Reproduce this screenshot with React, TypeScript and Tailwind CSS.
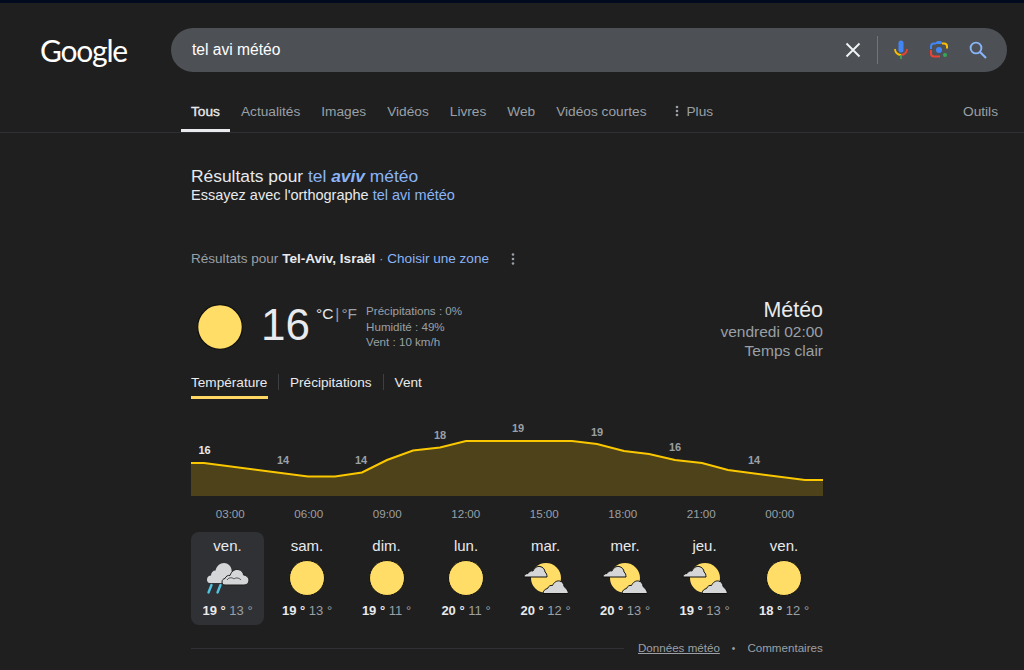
const tabs = ['Actualités', 'Images', 'Vidéos', 'Livres', 'Web', 'Vidéos courtes'];
const hours = ['03:00', '06:00', '09:00', '12:00', '15:00', '18:00', '21:00', '00:00'];

type Kind = 'sun' | 'rain' | 'partly';

const days: { name: string; kind: Kind; hi: number; lo: number }[] = [
  { name: 'ven.', kind: 'rain', hi: 19, lo: 13 },
  { name: 'sam.', kind: 'sun', hi: 19, lo: 13 },
  { name: 'dim.', kind: 'sun', hi: 19, lo: 11 },
  { name: 'lun.', kind: 'sun', hi: 20, lo: 11 },
  { name: 'mar.', kind: 'partly', hi: 20, lo: 12 },
  { name: 'mer.', kind: 'partly', hi: 20, lo: 13 },
  { name: 'jeu.', kind: 'partly', hi: 19, lo: 13 },
  { name: 'ven.', kind: 'sun', hi: 18, lo: 12 },
];

// chart coordinates, relative to the chart's left edge / top of the svg
const line =
  '0,53 13,53 117,66.5 144,66.5 171,62.5 196,50 222,40.5 249,37.5 275,31 381,31 406,34 433,41 458,44 484,50 511,53 537,60 614,70 632,70';
const labels = [
  { x: 13.5, y: 44, v: 16, active: true },
  { x: 92, y: 54, v: 14 },
  { x: 170, y: 54, v: 14 },
  { x: 249, y: 29, v: 18 },
  { x: 327, y: 22, v: 19 },
  { x: 406, y: 26, v: 19 },
  { x: 484, y: 41, v: 16 },
  { x: 563, y: 54, v: 14 },
];

function Sun({ size }: { size: number }) {
  return (
    <svg width={size} height={size} viewBox="0 0 36 36">
      <circle cx="18" cy="18" r="17.5" fill="#ffdd66" stroke="#111" strokeWidth="1" />
    </svg>
  );
}

function Rain() {
  return (
    <svg width="44" height="34" viewBox="0 0 44 34">
      <path d="M4 22 C1.5 22 1 20 1 18.5 C1 16 3 14.5 5 14.5 C5 11.5 7 9.5 9.5 9.5 C10.5 5 14 2 18 2 C22 2 25 5 25.5 8.5 L26 14 L19 22 Z" fill="#d5d6d7" />
      <path d="M19 24 C17 24 16 22.5 16 21 C16 19 17.5 17.5 19 17.5 C20 15 22 14 24 14.5 C25.5 10 29 8 32 8.5 C35.5 9 37.5 11.5 37.5 14 C40 14 43 16.5 43 19 C43 22 41 24 38 24 Z" fill="#d5d6d7" stroke="#1f1f1f" strokeWidth="1" />
      <path d="M21 19 C22.5 16.5 26 16 28 18 C29.5 16.5 33 16.5 35 19" fill="none" stroke="#2a2a2a" strokeWidth="0.8" />
      <path d="M5.5 24 L2.5 31.5 M14.5 24 L11.5 31.5" stroke="#4fc3e0" strokeWidth="2.4" strokeLinecap="round" />
    </svg>
  );
}

function Partly() {
  return (
    <svg width="46" height="34" viewBox="0 0 46 34">
      <circle cx="23" cy="17" r="15" fill="#ffdd66" />
      <path d="M1 16 C1 14 2.5 12.5 5 12.5 C6 10.5 8 9.5 10 10 C11.5 6.5 14.5 5 17 5.5 C20 6 22 8.5 22 11 C23.5 12 24 14 24 16 Z" fill="#d5d6d7" stroke="#111" strokeWidth="1" />
      <path d="M20 32.5 C20 30 22 28 24.5 27.5 C25.5 25 27.5 24 29.5 24.5 C31 21 34 19.5 36.5 20 C39.5 20.5 41 23 41 25.5 C43.5 27 45 30 45.5 32.5 Z" fill="#d5d6d7" stroke="#111" strokeWidth="1" />
    </svg>
  );
}

function DayIcon({ kind }: { kind: Kind }) {
  if (kind === 'sun') return <Sun size={36} />;
  if (kind === 'rain') return <Rain />;
  return <Partly />;
}

export default function App() {
  return (
    <div
      className="w-[1024px] h-[670px] overflow-hidden bg-[#1f1f1f] text-[#e8eaed]"
      style={{ fontFamily: '"Liberation Sans", Arial, sans-serif' }}
    >
      <div className="h-[3px] bg-[#010a1f]"></div>

      {/* Header */}
      <div className="flex items-center mt-[25px] h-[44px]">
        <div className="w-[171px] pl-[40px] text-white text-[30px] leading-none tracking-[-1.2px] font-['Lato',sans-serif] -mt-[1px]">
          Google
        </div>
        <div className="w-[836px] h-[44px] rounded-full bg-[#4d5156] flex items-center pl-[21px] pr-[17px]">
          <span className="flex-1 text-[15.6px] text-white">tel avi météo</span>
          <svg width="24" height="24" viewBox="0 0 24 24" className="mr-[12px]">
            <path d="M5.5 5.5 L18.5 18.5 M18.5 5.5 L5.5 18.5" stroke="#f1f3f4" strokeWidth="1.9" />
          </svg>
          <div className="w-[1px] h-[28px] bg-[#70757a] mr-[11px]"></div>
          <svg width="24" height="24" viewBox="0 0 24 24" className="mr-[14px]">
            <rect x="9.5" y="2.5" width="5" height="12" rx="2.5" fill="#4285f4" />
            <path d="M6 11 a6 6 0 0 0 6 6" fill="none" stroke="#fbbc04" strokeWidth="1.8" />
            <path d="M18 11 a6 6 0 0 1 -6 6" fill="none" stroke="#ea4335" strokeWidth="1.8" />
            <path d="M12 17 V21" stroke="#34a853" strokeWidth="1.8" />
          </svg>
          <svg width="24" height="24" viewBox="0 0 24 24" className="mr-[15px]">
            <path d="M4 11 V8.5 a3 3 0 0 1 3 -3 h2" fill="none" stroke="#4285f4" strokeWidth="2" />
            <path d="M9 5.5 l1 -2 h4 l1 2 h-6" fill="#4285f4" stroke="#4285f4" strokeWidth="1" />
            <path d="M15 5.5 h2 a3 3 0 0 1 3 3 v2" fill="none" stroke="#fbbc04" strokeWidth="2" />
            <path d="M4 12 v3.5 a3 3 0 0 0 3 3 h6" fill="none" stroke="#ea4335" strokeWidth="2" />
            <circle cx="12" cy="12" r="3" fill="#4285f4" />
            <circle cx="18" cy="17" r="2" fill="#34a853" />
          </svg>
          <svg width="24" height="24" viewBox="0 0 24 24">
            <circle cx="10" cy="10" r="5.4" fill="none" stroke="#8ab4f8" strokeWidth="1.9" />
            <path d="M14 14 L20 20" stroke="#8ab4f8" strokeWidth="2.1" />
          </svg>
        </div>
      </div>

      {/* Tabs */}
      <div className="flex items-stretch h-[61px] pt-[24px] pl-[181px] pr-[26px] border-b border-[#2e3033] text-[13.7px] text-[#9aa0a6]">
        <div className="px-[10px] h-[36px] pt-[6px] text-[#e8eaed] [-webkit-text-stroke:0.35px_#e8eaed] border-b-[3px] border-[#e8eaed] box-border">
          Tous
        </div>
        <div className="flex gap-[21px] ml-[11px] pt-[6px]">
          {tabs.map((t) => (
            <span key={t}>{t}</span>
          ))}
        </div>
        <div className="flex items-start gap-[7px] ml-[29px] pt-[6px]">
          <svg width="4" height="14" viewBox="0 0 4 14" className="mt-[2px]">
            <circle cx="2" cy="3" r="1.3" fill="#9aa0a6" />
            <circle cx="2" cy="7" r="1.3" fill="#9aa0a6" />
            <circle cx="2" cy="11" r="1.3" fill="#9aa0a6" />
          </svg>
          <span>Plus</span>
        </div>
        <span className="ml-auto pt-[6px]">Outils</span>
      </div>

      {/* Content */}
      <div className="ml-[191px] w-[632px]">
        <div className="mt-[33px] text-[17.4px] leading-[20px]">
          Résultats pour <span className="text-[#8ab4f8]">tel <b className="italic">aviv</b> météo</span>
        </div>
        <div className="text-[14.5px] leading-[18px]">
          Essayez avec l'orthographe <span className="text-[#8ab4f8]">tel avi météo</span>
        </div>

        <div className="mt-[45px] flex items-center h-[20px] text-[13.55px]">
          <span className="text-[#9aa0a6]">Résultats pour&nbsp;</span>
          <b className="text-[#e8eaed]">Tel-Aviv, Israël</b>
          <span className="text-[#9aa0a6]">&nbsp;·&nbsp;</span>
          <span className="text-[#8ab4f8]">Choisir une zone</span>
          <svg width="4" height="14" viewBox="0 0 4 14" className="ml-[22px]">
            <circle cx="2" cy="2.5" r="1.3" fill="#9aa0a6" />
            <circle cx="2" cy="7" r="1.3" fill="#9aa0a6" />
            <circle cx="2" cy="11.5" r="1.3" fill="#9aa0a6" />
          </svg>
        </div>

        {/* Current conditions */}
        <div className="flex mt-[19px] h-[70px]">
          <div className="pl-[6px] pt-[16px]">
            <Sun size={46} />
          </div>
          <div className="text-[44px] leading-[56px] ml-[18px] pt-[9px] text-[#e8eaed]">16</div>
          <div className="flex text-[15.5px] leading-[18px] ml-[6px] pt-[17px] text-[#9aa0a6]">
            <span className="text-[#e8eaed]">°C</span>
            <span className="mx-[2px]">|</span>
            <span>°F</span>
          </div>
          <div className="ml-[9px] pt-[15px] text-[11.6px] leading-[15.5px] text-[#9aa0a6]">
            <div>Précipitations : 0%</div>
            <div>Humidité : 49%</div>
            <div>Vent : 10 km/h</div>
          </div>
          <div className="ml-auto text-right text-[#9aa0a6] pt-[11px]">
            <div className="text-[21.4px] leading-[23px] text-[#e8eaed]">Météo</div>
            <div className="leading-[19px] text-[15.5px]">vendredi 02:00</div>
            <div className="leading-[19px] text-[15.5px]">Temps clair</div>
          </div>
        </div>

        {/* Chart tabs */}
        <div className="flex mt-[13px] h-[30px] text-[13.6px]">
          <div className="h-[28px] w-[77px] whitespace-nowrap pt-[2px] border-b-[3px] border-[#fdd663]">Température</div>
          <div className="w-[1px] h-[16px] mt-[3px] ml-[10px] mr-[11px] bg-[#3c4043]"></div>
          <div className="pt-[2px]">Précipitations</div>
          <div className="w-[1px] h-[16px] mt-[3px] ml-[11px] mr-[11px] bg-[#3c4043]"></div>
          <div className="pt-[2px]">Vent</div>
        </div>

        {/* Chart */}
        <svg width="632" height="90" viewBox="0 0 632 90" className="block mt-[9px]">
          <polygon points={`0,86 ${line} 632,86`} fill="#4d4219" />
          <polyline points={line} fill="none" stroke="#fbc800" strokeWidth="2" />
          {labels.map((l) => (
            <text
              key={l.x}
              x={l.x}
              y={l.y}
              textAnchor="middle"
              fontSize="11"
              fontWeight="700"
              fill={l.active ? '#e8eaed' : '#9aa0a6'}
              fontFamily="'Liberation Sans', Arial, sans-serif"
            >
              {l.v}
            </text>
          ))}
        </svg>

        {/* Hours */}
        <div className="flex w-[628px] mt-[6px] text-[11.6px] leading-[16px] text-[#9aa0a6]">
          {hours.map((h) => (
            <div key={h} className="flex-1 text-center">
              {h}
            </div>
          ))}
        </div>

        {/* Days */}
        <div className="flex w-[632px] gap-[6.5px] mt-[10px]">
          {days.map((d, i) => (
            <div
              key={i}
              className={`w-[73px] shrink-0 h-[93px] rounded-[8px] flex flex-col items-center pt-[5px] ${i === 0 ? 'bg-[#303134]' : ''}`}
            >
              <div className="text-[15px] leading-[18px] text-[#e8eaed]">{d.name}</div>
              <div className="h-[38px] mt-[4px] flex items-center justify-center">
                <DayIcon kind={d.kind} />
              </div>
              <div className="mt-[6px] text-[13px] leading-[16px] whitespace-nowrap">
                <b className="text-[#e8eaed]">{d.hi} °</b>
                <span className="text-[#9aa0a6]"> {d.lo} °</span>
              </div>
            </div>
          ))}
        </div>

        {/* Footer */}
        <div className="flex items-center mt-[14px] h-[18px] text-[11.6px] text-[#9aa0a6] whitespace-nowrap">
          <div className="w-[433px] h-[1px] bg-[#303134]"></div>
          <span className="ml-[14px] underline">Données météo</span>
          <span className="ml-[12px] mr-[12px] text-[10px] leading-[18px] mt-[2px]">•</span>
          <span>Commentaires</span>
        </div>
      </div>
    </div>
  );
}
